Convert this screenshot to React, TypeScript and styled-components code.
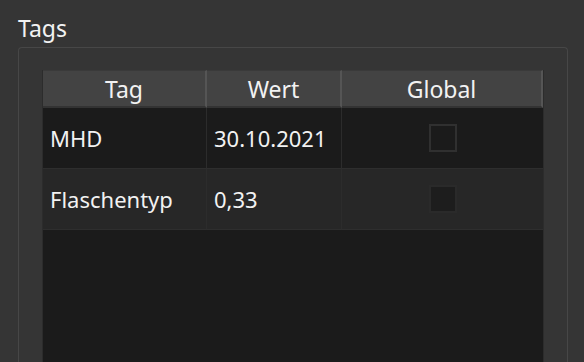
import React from 'react';
import styled, { createGlobalStyle } from 'styled-components';

const Global = createGlobalStyle`
  html, body {
    margin: 0;
    padding: 0;
    background: #353535;
    width: 584px;
    height: 362px;
    overflow: hidden;
    font-family: "Noto Sans", "Open Sans", sans-serif;
    color: #f2f2f2;
  }
`;

const Page = styled.div`
  padding: 13px 16px 0 18px;
  height: 362px;
  box-sizing: border-box;
  overflow: hidden;
`;

const Title = styled.div`
  font-size: 23px;
  line-height: 30px;
  height: 34px;
`;

const Group = styled.div`
  border: 1px solid #474747;
  border-bottom: none;
  border-radius: 4px 4px 0 0;
  padding: 22px 23px 0 23px;
  height: 330px;
  box-sizing: border-box;
`;

const Table = styled.div`
  background: #1b1b1b;
  border-left: 1px solid #2c2c2c;
  border-right: 1px solid #2c2c2c;
  height: 320px;
  display: grid;
  grid-template-columns: 164px 135px 1fr;
  grid-auto-rows: min-content;
`;

const Head = styled.div`
  height: 38px;
  box-sizing: border-box;
  background: #434343;
  border-top: 1px solid #3a3a3a;
  border-bottom: 2px solid #333;
  border-right: 2px solid #555;
  display: flex;
  align-items: center;
  justify-content: center;
  font-size: 23px;
  &:last-of-type {
    border-right: none;
  }
`;

const Cell = styled.div<{ $alt?: boolean; $last?: boolean; $center?: boolean }>`
  height: 61px;
  box-sizing: border-box;
  background: ${(p) => (p.$alt ? '#272727' : '#1b1b1b')};
  border-bottom: 1px solid #2e2e2e;
  border-right: ${(p) => (p.$last ? 'none' : '1px solid #2c2c2c')};
  display: flex;
  align-items: center;
  justify-content: ${(p) => (p.$center ? 'center' : 'flex-start')};
  padding-left: ${(p) => (p.$center ? '0' : '7px')};
  font-size: 22px;
`;

const Check = styled.div<{ $filled?: boolean }>`
  width: 28px;
  height: 28px;
  box-sizing: border-box;
  border: 2px solid ${(p) => (p.$filled ? '#2a2a2a' : '#303030')};
  background: ${(p) => (p.$filled ? '#1d1d1d' : '#1b1b1b')};
`;

const rows = [
  { tag: 'MHD', wert: '30.10.2021' },
  { tag: 'Flaschentyp', wert: '0,33' },
];

export default function App() {
  return (
    <Page>
      <Global />
      <Title>Tags</Title>
      <Group>
        <Table>
          <Head>Tag</Head>
          <Head>Wert</Head>
          <Head>Global</Head>
          {rows.map((r, i) => (
            <React.Fragment key={r.tag}>
              <Cell $alt={i % 2 === 1}>{r.tag}</Cell>
              <Cell $alt={i % 2 === 1}>{r.wert}</Cell>
              <Cell $alt={i % 2 === 1} $last $center>
                <Check $filled={i % 2 === 1} />
              </Cell>
            </React.Fragment>
          ))}
        </Table>
      </Group>
    </Page>
  );
}
